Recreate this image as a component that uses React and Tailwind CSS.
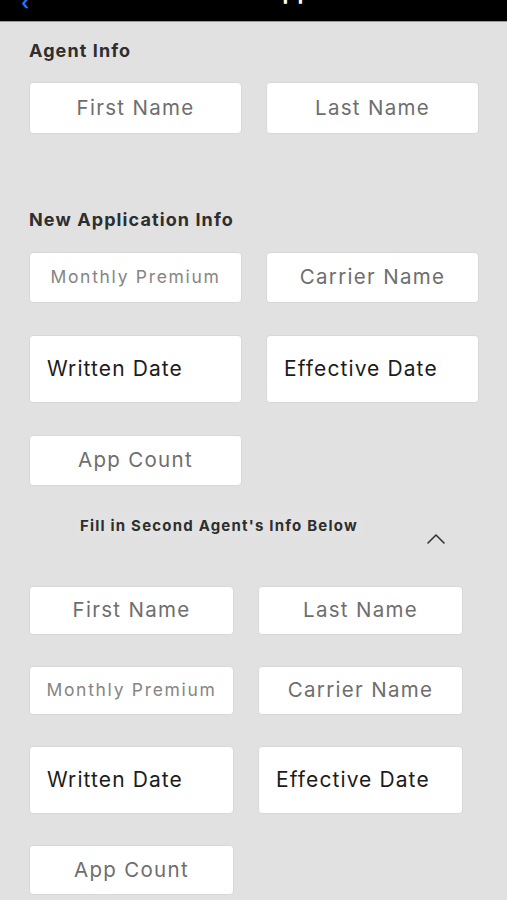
import { ChevronUp } from "lucide-react";

const font = { fontFamily: "Inter, 'Open Sans', sans-serif" };

function Field({ label, kind = "name", className = "" }) {
  if (kind === "date") {
    return (
      <div className={`flex h-[68px] items-center rounded-[4px] border border-[#d8d8d8] bg-white pl-[17px] text-[21px] tracking-[1.1px] text-[#1c1c1c] ${className}`}>
        {label}
      </div>
    );
  }
  const small = kind === "premium";
  return (
    <div
      className={`flex items-center justify-center rounded-[4px] border border-[#d8d8d8] bg-white ${
        small ? "text-[17.5px] tracking-[1.7px] text-[#858585]" : "text-[20.5px] tracking-[1.3px] text-[#6e6e6e]"
      } ${className}`}
    >
      {label}
    </div>
  );
}

export default function App() {
  return (
    <div className="min-h-[900px] w-[507px] overflow-hidden bg-[#e1e1e1]" style={font}>
      {/* top bar, title cut off by the screenshot */}
      <div className="relative flex h-[22px] items-end justify-center overflow-hidden border-b border-[#9a9a9a] bg-black">
        <span className="absolute -top-[7px] left-[21px] text-[20px] font-semibold leading-none text-[#1e7cf2]">‹</span>
        <span className="mb-[18px] pl-[70px] text-[24px] font-semibold leading-none text-white">App</span>
      </div>

      <div className="pl-[29px] pr-[28px]">
        <h2 className="mt-[18px] text-[18px] font-bold leading-[22px] tracking-[1.1px] text-[#2e2e2e]">Agent Info</h2>
        <div className="mt-[20px] grid grid-cols-2 gap-x-[24px]">
          <Field label="First Name" className="h-[52px]" />
          <Field label="Last Name" className="h-[52px]" />
        </div>

        <h2 className="mt-[75px] text-[18px] font-bold leading-[22px] tracking-[1.1px] text-[#2e2e2e]">New Application Info</h2>
        <div className="mt-[21px] grid grid-cols-2 gap-x-[24px] gap-y-[32px]">
          <Field label="Monthly Premium" kind="premium" className="h-[51px]" />
          <Field label="Carrier Name" className="h-[51px]" />
          <Field label="Written Date" kind="date" />
          <Field label="Effective Date" kind="date" />
          <Field label="App Count" className="h-[51px]" />
        </div>
      </div>

      <div className="mt-[27px] flex items-start pl-[76px]">
        <div className="w-[344px]">
          <span className="inline-block rounded-sm bg-[#e2e2e2] px-[4px] py-[2px] text-[15px] font-bold leading-[20px] tracking-[1.2px] text-[#2e2e2e]">
            Fill in Second Agent's Info Below
          </span>
        </div>
        <ChevronUp size={32} strokeWidth={1.2} className="mt-[10px] text-[#333]" />
      </div>

      <div className="mt-[31px] pl-[29px] pr-[44px]">
        <div className="grid grid-cols-2 gap-x-[24px] gap-y-[31px]">
          <Field label="First Name" className="h-[49px]" />
          <Field label="Last Name" className="h-[49px]" />
          <Field label="Monthly Premium" kind="premium" className="h-[49px]" />
          <Field label="Carrier Name" className="h-[49px]" />
          <Field label="Written Date" kind="date" className="pl-[16px]" />
          <Field label="Effective Date" kind="date" className="pl-[16px]" />
          <Field label="App Count" className="h-[50px]" />
        </div>
      </div>
    </div>
  );
}
